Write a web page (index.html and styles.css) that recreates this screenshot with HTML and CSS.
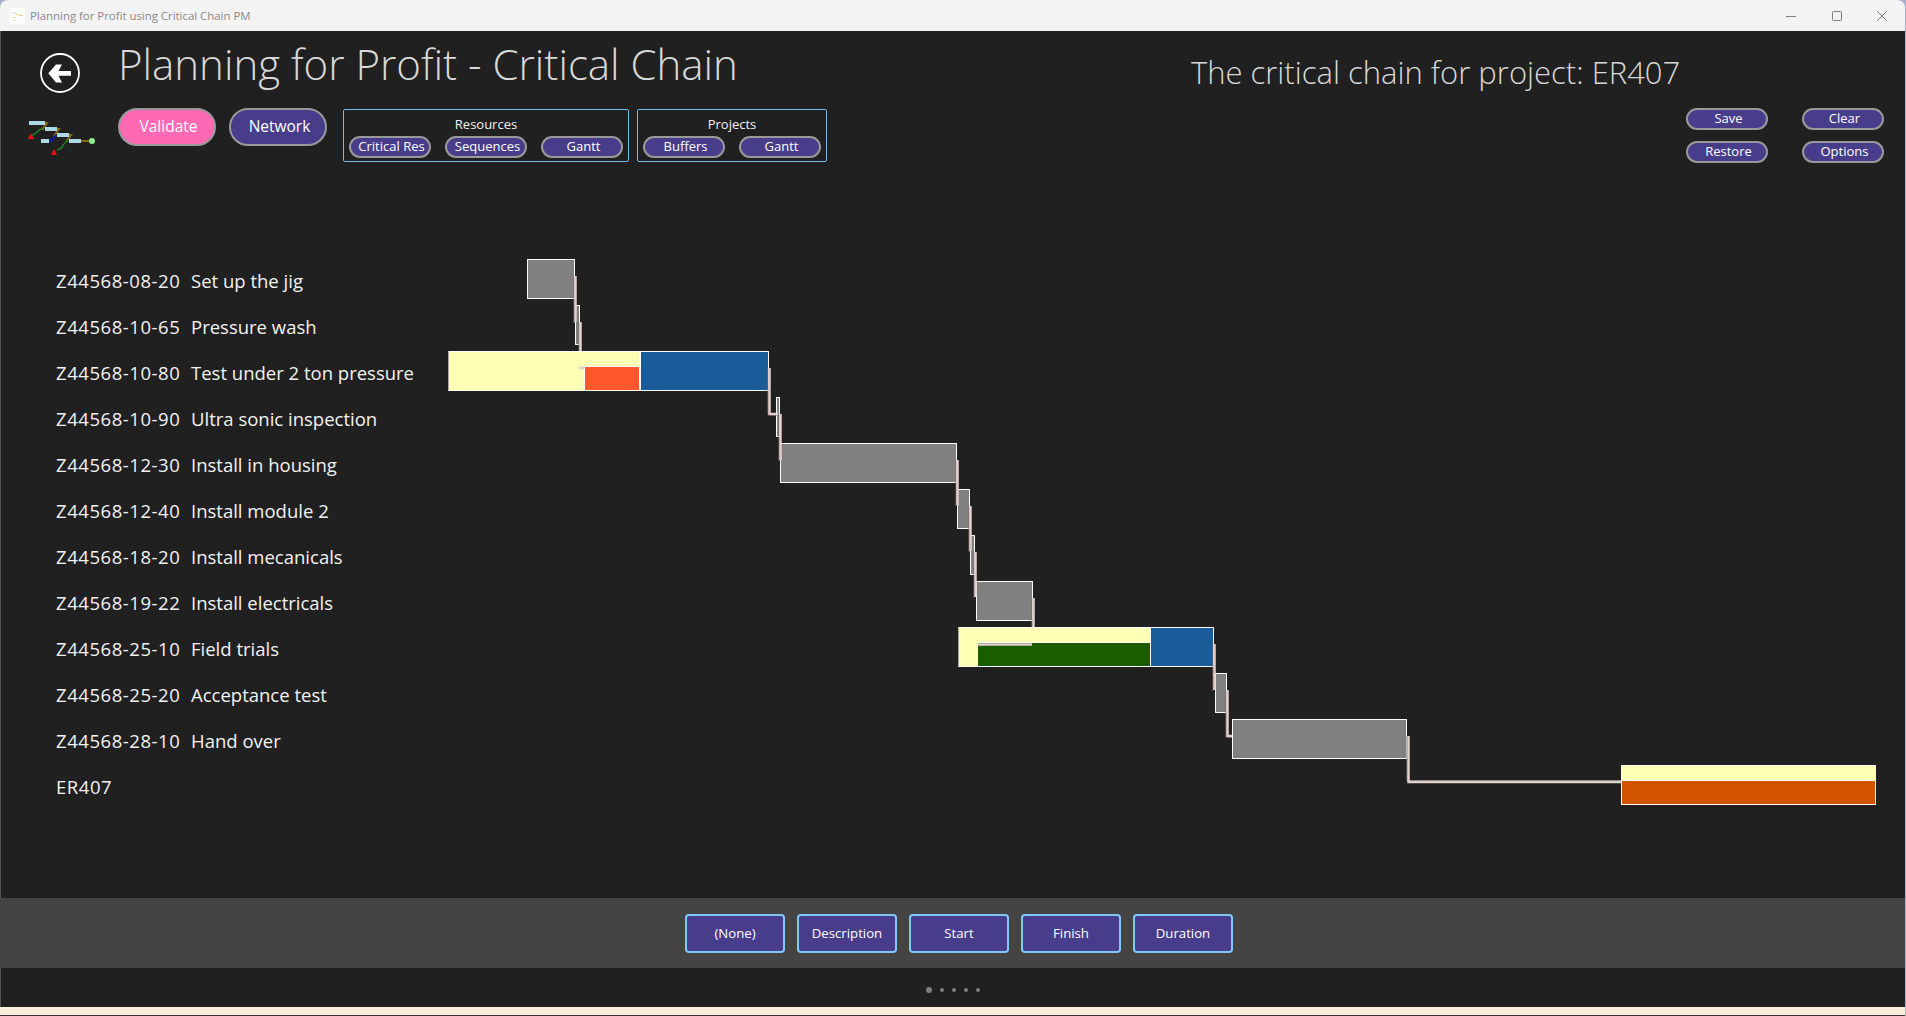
FILE: index.html
```html
<!DOCTYPE html>
<html lang="en">
<head>
<meta charset="utf-8">
<title>Planning for Profit using Critical Chain PM</title>
<link rel="stylesheet" href="styles.css">
</head>
<body>
<div class="window">
  <header class="titlebar">
    <svg class="app-icon" width="16" height="16" viewBox="0 0 16 16">
      <rect width="16" height="16" fill="#fdfdfd"/>
      <rect x="2" y="4" width="5" height="1" fill="#cfe3ea"/>
      <rect x="6" y="6" width="4" height="1" fill="#e8d9a0"/>
      <rect x="10" y="7" width="4" height="1" fill="#e8cf80"/>
      <rect x="3" y="9" width="4" height="1" fill="#e6d9a8"/>
      <rect x="4" y="12" width="4" height="1" fill="#cfe3ea"/>
    </svg>
    <span class="app-title">Planning for Profit using Critical Chain PM</span>
    <div class="win-controls">
      <svg width="10" height="10" viewBox="0 0 10 10"><path d="M0 5.5H10" class="win-stroke"/></svg>
      <svg width="10" height="10" viewBox="0 0 10 10"><rect x=".5" y=".5" width="9" height="9" rx="1" class="win-stroke"/></svg>
      <svg width="10" height="10" viewBox="0 0 10 10"><path d="M0 0L10 10M10 0L0 10" class="win-stroke"/></svg>
    </div>
  </header>

  <main class="content">
    <section class="heading">
      <button class="back" aria-label="Back">
        <svg width="40" height="40" viewBox="0 0 40 40">
          <circle cx="20" cy="20" r="19" fill="none" stroke="#fff" stroke-width="1.8"/>
          <path d="M31 18H18.5L22 11.5H16L8.3 20.3L16 29.5H22L18.5 22.7H31Z" fill="#fff"/>
        </svg>
      </button>
      <h1 class="title">Planning for Profit - Critical Chain</h1>
      <h2 class="subtitle">The critical chain for project: ER407</h2>
    </section>

    <section class="toolbar">
      <svg class="logo" width="68" height="36" viewBox="0 0 68 36">
        <path d="M17 3H19L14 10M29 9H31L26 16M41 15H43L38 22M53 21H62" fill="none" stroke="#8b6914" stroke-width="2"/>
        <path d="M4 15C8 15 10 9 15 8" fill="none" stroke="#1e7a1e" stroke-width="1.6"/>
        <path d="M29 30C36 29 34 23 40 20" fill="none" stroke="#1e7a1e" stroke-width="1.6"/>
        <path d="M20 21H23L28 15" fill="none" stroke="#1414c8" stroke-width="1.8"/>
        <rect x="1" y="1" width="16" height="4" fill="#add8e6"/>
        <rect x="17" y="7" width="12" height="4" fill="#add8e6"/>
        <rect x="29" y="13" width="12" height="4" fill="#add8e6"/>
        <rect x="13" y="19" width="8" height="4" fill="#add8e6"/>
        <rect x="41" y="19" width="12" height="4" fill="#add8e6"/>
        <path d="M3 13L6 19H0Z" fill="#e81010"/>
        <path d="M26 29L29 35H23Z" fill="#e81010"/>
        <circle cx="64" cy="21" r="3" fill="#90ee90"/>
      </svg>
      <button class="pill pill-lg pill-pink">Validate</button>
      <button class="pill pill-lg">Network</button>
      <div class="group group-res">
        <div class="group-label">Resources</div>
        <div class="group-btns">
          <button class="pill pill-sm">Critical Res</button>
          <button class="pill pill-sm">Sequences</button>
          <button class="pill pill-sm">Gantt</button>
        </div>
      </div>
      <div class="group group-proj">
        <div class="group-label">Projects</div>
        <div class="group-btns">
          <button class="pill pill-sm">Buffers</button>
          <button class="pill pill-sm">Gantt</button>
        </div>
      </div>
      <div class="actions">
        <button class="pill pill-sm">Save</button>
        <button class="pill pill-sm">Clear</button>
        <button class="pill pill-sm">Restore</button>
        <button class="pill pill-sm">Options</button>
      </div>
    </section>

    <section class="chart">
      <div class="row"><div class="label"><span class="code">Z44568-08-20</span><span>Set up the jig</span></div>
        <div class="track"><div class="bar grey" style="left:79px;width:48px"></div></div></div>
      <div class="row"><div class="label"><span class="code">Z44568-10-65</span><span>Pressure wash</span></div>
        <div class="track"><div class="bar grey" style="left:127px;width:5px"></div></div></div>
      <div class="row"><div class="label"><span class="code">Z44568-10-80</span><span>Test under 2 ton pressure</span></div>
        <div class="track">
          <div class="bar yellow edge" style="left:0;width:192px"></div>
          <div class="bar low red" style="left:136px;width:56px"></div>
          <div class="bar blue" style="left:192px;width:129px"></div>
        </div></div>
      <div class="row"><div class="label"><span class="code">Z44568-10-90</span><span>Ultra sonic inspection</span></div>
        <div class="track"><div class="bar grey" style="left:328px;width:4px"></div></div></div>
      <div class="row"><div class="label"><span class="code">Z44568-12-30</span><span>Install in housing</span></div>
        <div class="track"><div class="bar grey" style="left:332px;width:177px"></div></div></div>
      <div class="row"><div class="label"><span class="code">Z44568-12-40</span><span>Install module 2</span></div>
        <div class="track"><div class="bar grey" style="left:509px;width:13px"></div></div></div>
      <div class="row"><div class="label"><span class="code">Z44568-18-20</span><span>Install mecanicals</span></div>
        <div class="track"><div class="bar grey" style="left:522px;width:5px"></div></div></div>
      <div class="row"><div class="label"><span class="code">Z44568-19-22</span><span>Install electricals</span></div>
        <div class="track"><div class="bar grey" style="left:528px;width:57px"></div></div></div>
      <div class="row"><div class="label"><span class="code">Z44568-25-10</span><span>Field trials</span></div>
        <div class="track">
          <div class="bar yellow edge" style="left:510px;width:193px"></div>
          <div class="bar low green" style="left:529px;width:174px"></div>
          <div class="bar blue" style="left:702px;width:64px"></div>
        </div></div>
      <div class="row"><div class="label"><span class="code">Z44568-25-20</span><span>Acceptance test</span></div>
        <div class="track"><div class="bar grey" style="left:767px;width:12px"></div></div></div>
      <div class="row"><div class="label"><span class="code">Z44568-28-10</span><span>Hand over</span></div>
        <div class="track"><div class="bar grey" style="left:784px;width:175px"></div></div></div>
      <div class="row"><div class="label"><span class="code">ER407</span></div>
        <div class="track">
          <div class="bar yellow" style="left:1173px;width:255px"></div>
          <div class="bar low orange" style="left:1173px;width:255px"></div>
        </div></div>

      <svg class="links" width="1905" height="552" viewBox="0 256 1905 552">
        <g class="link-shadow">
          <path d="M574 276V323M579 322V351M768 368V415M778 415H770M779 414V461M956 460V506M969 506V552M974 552V598M1032 598V627M1213 644V691M1226 690V737M1232 737H1228M1407 736V780.5H1621"/>
        </g>
        <g class="link-main">
          <path d="M575.5 276V322M580.5 322V351M579 368H584M769.5 368V414H778M780.5 414V460M957.5 460V505M970.5 506V551M975.5 552V597M1033.5 598V627M977 644.5H1032M1214.5 644V690M1227.5 690V736H1232M1408.5 736V782H1621"/>
        </g>
      </svg>
    </section>

    <section class="panel">
      <button class="sort">(None)</button>
      <button class="sort">Description</button>
      <button class="sort">Start</button>
      <button class="sort">Finish</button>
      <button class="sort">Duration</button>
    </section>

    <nav class="pager">
      <span class="dot dot-on"></span><span class="dot"></span><span class="dot"></span><span class="dot"></span><span class="dot"></span>
    </nav>
    <div class="strip"></div>
  </main>
</div>
</body>
</html>
```

FILE: styles.css
```css
* { box-sizing: border-box; }

html, body {
  margin: 0;
  height: 100%;
  overflow: hidden;
}

body {
  background: #a9b0c9;
  font-family: "Open Sans", "Noto Sans", sans-serif;
  color: #fff;
}

button {
  font-family: inherit;
  color: #fff;
  cursor: pointer;
  padding: 0;
}

.window {
  width: 1905px;
  height: 1016px;
  display: flex;
  flex-direction: column;
  border-radius: 8px 8px 0 0;
  overflow: hidden;
}

.titlebar {
  height: 31px;
  flex: none;
  background: #f3f3f3;
  display: flex;
  align-items: center;
  padding-left: 9px;
}

.app-icon { flex: none; }

.app-title {
  margin-left: 5px;
  font-size: 11.4px;
  color: #8a8a8a;
}

.win-controls {
  margin-left: auto;
  margin-right: 18px;
  display: flex;
  gap: 35.5px;
}

.win-stroke {
  fill: none;
  stroke: #7d7d7d;
  stroke-width: 1;
}

.content {
  flex: 1;
  display: flex;
  flex-direction: column;
  background: #202020;
  box-shadow: inset 1px 0 0 #555;
}

.heading {
  height: 77px;
  flex: none;
  display: flex;
  padding-left: 40px;
}

.back {
  width: 40px;
  height: 40px;
  margin-top: 22px;
  background: none;
  border: 0;
  line-height: 0;
}

.title {
  margin: 5px 0 0 38px;
  font-size: 42px;
  line-height: 56px;
  font-weight: 300;
  color: #d8d8d8;
  white-space: nowrap;
}

.subtitle {
  margin: 21px 0 0 453px;
  font-size: 31px;
  line-height: 40px;
  font-weight: 300;
  color: #d8d8d8;
  white-space: nowrap;
}

.toolbar {
  height: 55px;
  flex: none;
  display: flex;
  align-items: flex-start;
  padding-left: 28px;
}

.logo {
  flex: none;
  margin: 12px 22px 0 0;
}

.pill {
  background: #483d8b;
  border: 2px solid #999;
  border-radius: 999px;
  font-weight: 400;
  white-space: nowrap;
  padding: 0 0 2px 3px;
}

.pill-lg {
  width: 98px;
  height: 38px;
  font-size: 15.5px;
  font-weight: 500;
  margin-right: 13px;
}

.pill-pink { background: #ff69b4; }

.pill-sm {
  width: 82px;
  height: 22px;
  font-size: 13px;
  line-height: 16px;
}

.group {
  height: 53px;
  margin-top: 1px;
  border: 1px solid #76bdea;
  border-radius: 2px;
  padding: 0 5px;
  display: flex;
  flex-direction: column;
}

.group-res { width: 286px; margin-left: 3px; }
.group-proj { width: 190px; margin-left: 8px; }

.group-label {
  height: 26px;
  font-size: 13px;
  line-height: 28px;
  text-align: center;
  color: #f0f0f0;
}

.group-btns {
  display: flex;
  justify-content: space-between;
}

.actions {
  margin-left: auto;
  margin-right: 21px;
  display: grid;
  grid-template-columns: 82px 82px;
  column-gap: 34px;
  row-gap: 11px;
}

.chart {
  flex: 1;
  position: relative;
  margin-top: 93px;
}

.row {
  height: 46px;
  display: flex;
}

.label {
  width: 448px;
  flex: none;
  padding: 2px 0 0 56px;
  display: flex;
  align-items: center;
  font-size: 18.5px;
  color: #f2f2f2;
  white-space: nowrap;
}

.code {
  width: 135px;
  flex: none;
  letter-spacing: .55px;
}

.track {
  flex: 1;
  position: relative;
}

.bar {
  position: absolute;
  top: 3px;
  height: 40px;
  border: 1px solid #fff;
}

.bar.low {
  top: 18px;
  height: 25px;
}

.grey { background: #808080; }
.yellow { background: #fdffb5; }
.blue { background: #1a5c9a; }
.red { background: #ff582c; }
.green { background: #1a5c00; }
.orange { background: #d35400; }
.edge { border-left-color: #a8a8a0; }

.links {
  position: absolute;
  left: 0;
  top: 0;
  pointer-events: none;
}

.link-shadow path {
  fill: none;
  stroke: #7a6d6d;
  stroke-width: 1;
}

.link-main path {
  fill: none;
  stroke: #e4cfcf;
  stroke-width: 2.5;
}

.panel {
  height: 70px;
  flex: none;
  background: #444;
  display: flex;
  align-items: center;
  justify-content: center;
  gap: 12px;
  padding-left: 12px;
}

.sort {
  width: 100px;
  height: 39px;
  background: #483d8b;
  border: 2px solid #7fc8f8;
  border-radius: 4px;
  font-size: 13.2px;
  padding-left: 1px;
}

.pager {
  height: 39px;
  flex: none;
  display: flex;
  align-items: center;
  justify-content: center;
  gap: 8px;
  padding-top: 5px;
}

.dot {
  width: 4px;
  height: 4px;
  border-radius: 50%;
  background: #808080;
}

.dot-on {
  width: 6px;
  height: 6px;
}

.strip {
  height: 9px;
  flex: none;
  background: #fbeedc;
  border-bottom: 1px solid #333;
}
```
